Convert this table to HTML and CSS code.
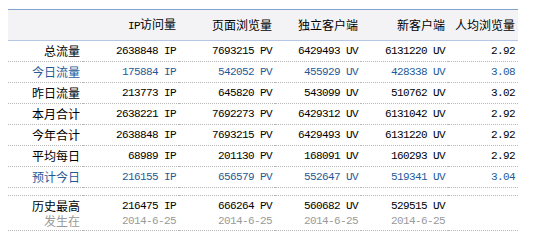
FILE: index.html
```html
<!DOCTYPE html>
<html>
<head>
<meta charset="utf-8">
<link rel="stylesheet" href="styles.css">
</head>
<body>
<table class="stats">
  <colgroup>
    <col class="c1"><col class="c2"><col class="c3"><col class="c4"><col class="c5"><col class="c6">
  </colgroup>
  <thead>
    <tr>
      <th></th>
      <th><span class="lat">IP</span>访问量</th>
      <th>页面浏览量</th>
      <th>独立客户端</th>
      <th>新客户端</th>
      <th>人均浏览量</th>
    </tr>
  </thead>
  <tbody>
    <tr><td class="lbl">总流量</td><td class="num">2638848 IP</td><td class="num">7693215 PV</td><td class="num">6429493 UV</td><td class="num">6131220 UV</td><td class="num">2.92</td></tr>
    <tr class="blue"><td class="lbl">今日流量</td><td class="num">175884 IP</td><td class="num">542052 PV</td><td class="num">455929 UV</td><td class="num">428338 UV</td><td class="num">3.08</td></tr>
    <tr><td class="lbl">昨日流量</td><td class="num">213773 IP</td><td class="num">645820 PV</td><td class="num">543099 UV</td><td class="num">510762 UV</td><td class="num">3.02</td></tr>
    <tr><td class="lbl">本月合计</td><td class="num">2638221 IP</td><td class="num">7692273 PV</td><td class="num">6429312 UV</td><td class="num">6131042 UV</td><td class="num">2.92</td></tr>
    <tr><td class="lbl">今年合计</td><td class="num">2638848 IP</td><td class="num">7693215 PV</td><td class="num">6429493 UV</td><td class="num">6131220 UV</td><td class="num">2.92</td></tr>
    <tr><td class="lbl">平均每日</td><td class="num">68989 IP</td><td class="num">201130 PV</td><td class="num">168091 UV</td><td class="num">160293 UV</td><td class="num">2.92</td></tr>
    <tr class="blue"><td class="lbl">预计今日</td><td class="num">216155 IP</td><td class="num">656579 PV</td><td class="num">552647 UV</td><td class="num">519341 UV</td><td class="num">3.04</td></tr>
    <tr class="spacer"><td colspan="6"></td></tr>
    <tr class="max">
      <td class="lbl"><div class="l1">历史最高</div><div class="l2 gray">发生在</div></td>
      <td class="num"><div class="l1">216475 IP</div><div class="l2 gray">2014-6-25</div></td>
      <td class="num"><div class="l1">666264 PV</div><div class="l2 gray">2014-6-25</div></td>
      <td class="num"><div class="l1">560682 UV</div><div class="l2 gray">2014-6-25</div></td>
      <td class="num"><div class="l1">529515 UV</div><div class="l2 gray">2014-6-25</div></td>
      <td class="num"></td>
    </tr>
  </tbody>
</table>
</body>
</html>
```
FILE: styles.css
```css
html, body { background: #fff; }
body {
  margin: 9px 8px;
  font-family: "Noto Sans CJK SC", sans-serif;
  font-size: 12px;
  color: #000;
}
.stats {
  border-collapse: collapse;
  table-layout: fixed;
  width: 510px;
}
.c1 { width: 75px; }
.c2 { width: 96px; }
.c3 { width: 96px; }
.c4 { width: 86px; }
.c5 { width: 87px; }
.c6 { width: 70px; }
.stats th {
  background: #f3f3f5;
  border-top: 1px solid #7fa3cd;
  border-bottom: 1px solid #b5c7e5;
  height: 30px;
  padding: 0 3px 0 0;
  text-align: right;
  font-weight: normal;
  font-size: 12px;
  line-height: 14px;
  color: #000;
  white-space: nowrap;
}
.stats th .lat {
  font-family: "Liberation Mono", monospace;
  font-size: 11px;
  letter-spacing: -0.6px;
}
.stats td {
  height: 20px;
  padding: 0 3px 0 0;
  text-align: right;
  border-bottom: 1px dotted #b8b8b8;
  white-space: nowrap;
  line-height: 14px;
}
.stats td.lbl {
  font-size: 12px;
  font-family: "Noto Sans CJK SC", sans-serif;
}
.stats td.num {
  font-family: "Liberation Mono", monospace;
  font-size: 11px;
  letter-spacing: -0.6px;
}
.blue td { color: #1f5a97; }
.spacer td { height: 7px; padding: 0; }
.max td { height: 34px; }
.max .l1, .max .l2 { height: 14px; line-height: 14px; overflow: visible; }
.max .l2 { margin-top: 1px; }
.max .gray { color: #9a9a9a; }
```
